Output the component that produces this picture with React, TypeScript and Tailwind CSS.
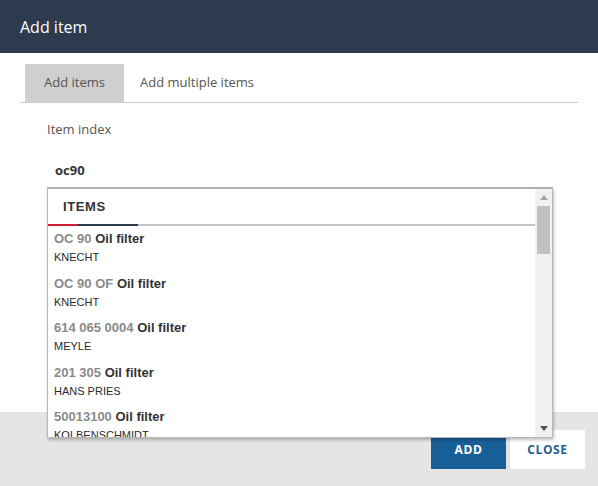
import React from "react";

const items = [
  { code: "OC 90", name: "Oil filter", brand: "KNECHT" },
  { code: "OC 90 OF", name: "Oil filter", brand: "KNECHT" },
  { code: "614 065 0004", name: "Oil filter", brand: "MEYLE" },
  { code: "201 305", name: "Oil filter", brand: "HANS PRIES" },
  { code: "50013100", name: "Oil filter", brand: "KOLBENSCHMIDT" },
];

export default function App() {
  return (
    <div
      className="relative w-[598px] h-[486px] bg-white overflow-hidden flex flex-col"
      style={{ fontFamily: '"Open Sans", sans-serif' }}
    >
      <div className="h-[53px] bg-[#2c3b4d] flex items-center px-[20px] shrink-0">
        <span className="text-white text-[16px] leading-none">Add item</span>
      </div>

      <div className="flex-1 flex flex-col">
        <div className="mt-[11px] mx-[20px] border-b border-[#cccccc] flex h-[39px]">
          <div className="ml-[5px] w-[99px] bg-[#cfcfcf] flex items-center justify-center text-[13px] text-[#555]">
            Add items
          </div>
          <div className="px-[16px] flex items-center text-[13px] text-[#555]">
            Add multiple items
          </div>
        </div>

        <div className="pl-[47px] mt-[17px] text-[13px] text-[#555] leading-[18px]">
          Item index
        </div>
        <div className="pl-[55px] mt-[23px] text-[13px] font-bold text-[#333] leading-[18px]">
          oc90
        </div>
      </div>

      <div className="h-[74px] bg-[#e5e5e5] shrink-0 flex justify-end items-start pt-[18px] pr-[13px] gap-[4px]">
        <button className="w-[75px] h-[39px] bg-[#185f98] text-white text-[12px] font-bold tracking-[0.6px]">
          ADD
        </button>
        <button className="w-[75px] h-[39px] bg-white text-[#1f5f96] text-[12px] font-bold tracking-[0.6px]">
          CLOSE
        </button>
      </div>

      <div
        className="absolute left-[47px] top-[187px] w-[506px] h-[251px] bg-white border border-[#b8b8b8] border-t-2 border-t-[#b0b0b0] shadow-[1px_2px_3px_rgba(0,0,0,0.25)] flex"
        style={{ fontFamily: '"Liberation Sans", Arial, sans-serif' }}
      >
        <div className="flex-1 flex flex-col overflow-hidden">
          <div className="h-[35px] flex items-center pl-[15px] shrink-0">
            <span className="text-[13px] font-bold text-[#333] tracking-[0.6px]">ITEMS</span>
          </div>
          <div className="flex h-[2px] bg-[#c4c4c4] shrink-0">
            <div className="w-[30px] bg-[#d0202f]" />
            <div className="w-[60px] bg-[#2c3b4d]" />
          </div>
          <div className="flex flex-col">
            {items.map((it, i) => (
              <div key={i} className="pl-[6px] pt-[5px] pb-[6.5px]">
                <div className="text-[13px] font-bold leading-[16px] whitespace-nowrap">
                  <span className="text-[#8a8a8a]">{it.code}</span>{" "}
                  <span className="text-[#333]">{it.name}</span>
                </div>
                <div className="text-[11px] text-[#2a2a2a] leading-[14px] mt-[3px] whitespace-nowrap">
                  {it.brand}
                </div>
              </div>
            ))}
          </div>
        </div>
        <div className="w-[17px] bg-[#f1f1f1] flex flex-col items-center shrink-0">
          <div className="h-[17px] flex items-center justify-center">
            <svg width="8" height="5" viewBox="0 0 8 5">
              <polygon points="4,0 8,5 0,5" fill="#a3a3a3" />
            </svg>
          </div>
          <div className="w-[13px] h-[48px] bg-[#c1c1c1]" />
          <div className="flex-1" />
          <div className="h-[17px] flex items-center justify-center">
            <svg width="8" height="5" viewBox="0 0 8 5">
              <polygon points="0,0 8,0 4,5" fill="#505050" />
            </svg>
          </div>
        </div>
      </div>
    </div>
  );
}
